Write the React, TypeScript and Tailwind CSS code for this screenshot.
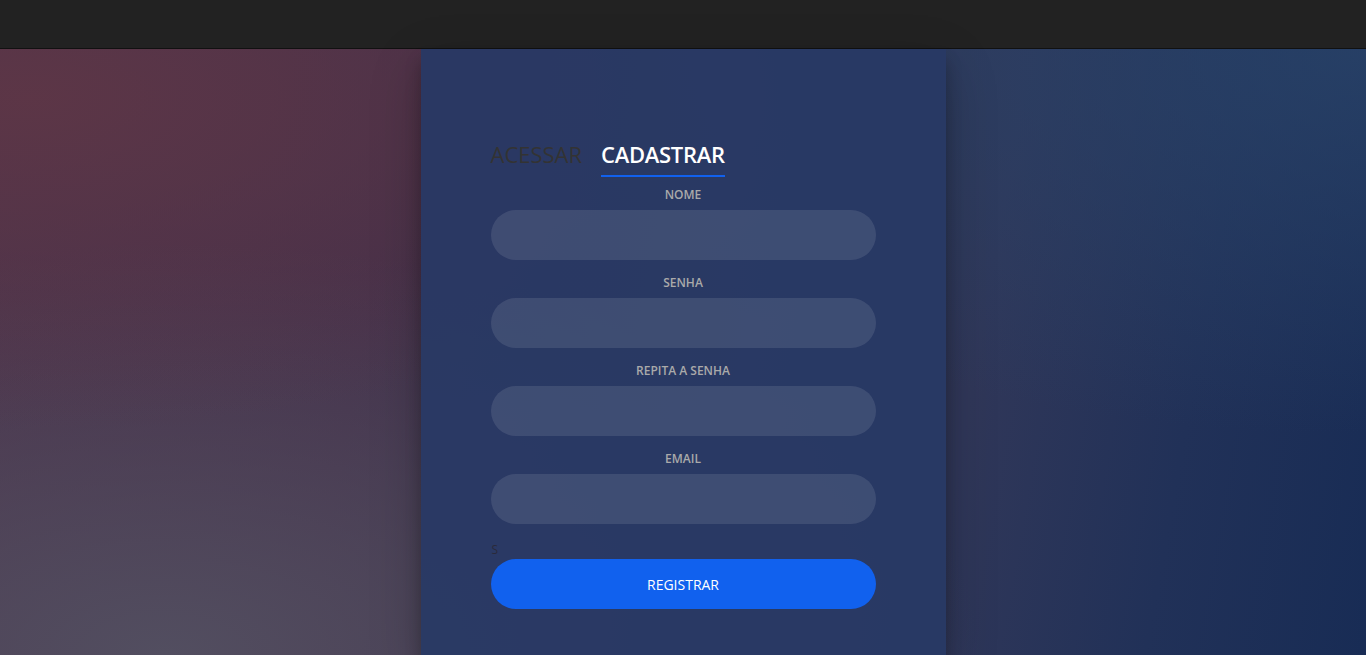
import { FC } from 'react'

const fields = ['Nome', 'Senha', 'Repita a senha', 'Email']

const App: FC = () => {
  return (
    <div className="h-screen flex flex-col overflow-hidden font-['Open_Sans',sans-serif]">
      <div className="h-[48px] bg-[#222222] border-b border-[#111111] box-content shrink-0"></div>
      <div className="flex-1 flex justify-center bg-[#3a3452] bg-[radial-gradient(ellipse_at_2%_8%,rgba(94,54,70,0.9),transparent_42%),radial-gradient(ellipse_at_12%_100%,rgba(82,78,96,1),transparent_48%),radial-gradient(ellipse_at_100%_0%,rgba(40,66,104,0.85),transparent_45%),linear-gradient(100deg,#4b334b_0%,#44304a_28%,#38374f_50%,#303759_70%,#213158_85%,#182c55_100%)]">
        <div className="w-[525px] bg-[rgba(40,57,101,0.93)] shadow-[0_12px_15px_rgba(0,0,0,0.24),0_17px_50px_rgba(0,0,0,0.19)] pt-[90px] px-[70px]">
          <div className="flex items-start">
            <span className="text-[22px] leading-[30px] pb-[6px] border-b-2 border-transparent text-[#333333] mr-[19px] uppercase">
              Acessar
            </span>
            <span className="text-[22px] leading-[30px] pb-[6px] border-b-2 border-[#1161ee] text-white font-semibold uppercase tracking-[-0.3px]">
              Cadastrar
            </span>
          </div>
          <form className="mt-[9px]" onSubmit={(e) => e.preventDefault()}>
            {fields.map((f) => (
              <div key={f} className="mb-[14px]">
                <label className="block text-center text-[12px] leading-[18px] font-semibold text-[#aaaaaa] uppercase mb-[6px]">
                  {f}
                </label>
                <input
                  type="text"
                  className="block w-full h-[50px] rounded-[25px] bg-[rgba(255,255,255,0.1)] px-[20px] text-white outline-none"
                />
              </div>
            ))}
            <div className="mt-[17px] text-[12px] leading-[18px] text-[#2a2a3a] pl-[1px]">S</div>
            <button
              type="submit"
              className="block w-full h-[50px] rounded-[25px] bg-[#1161ee] text-white text-[14px] uppercase"
            >
              Registrar
            </button>
          </form>
        </div>
      </div>
    </div>
  )
}

export default App
